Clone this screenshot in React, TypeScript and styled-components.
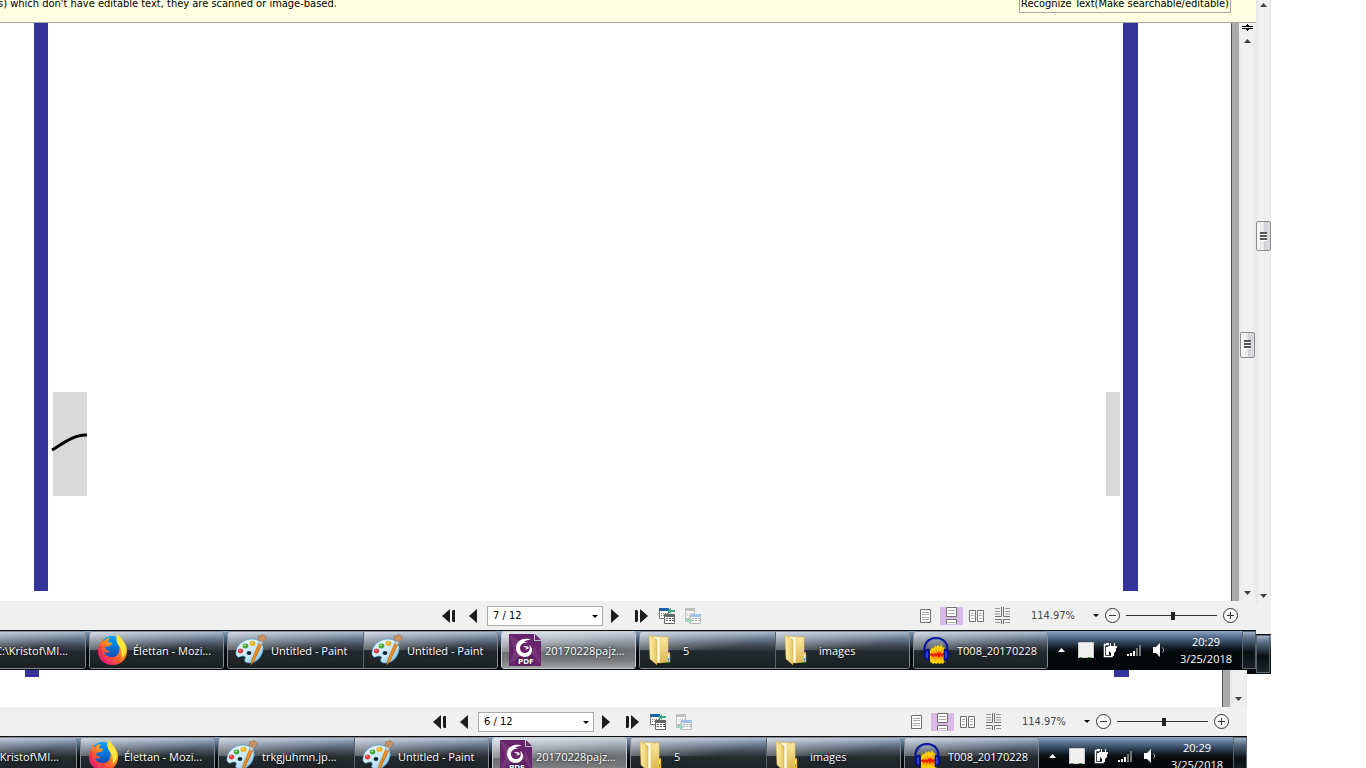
import React from "react";
import styled, { createGlobalStyle, css } from "styled-components";

const UI_FONT = `"DejaVu Sans Condensed", "DejaVu Sans", sans-serif`;
const TASK_FONT = `"Open Sans", "Noto Sans", sans-serif`;

const GlobalStyle = createGlobalStyle`
  *, *::before, *::after { box-sizing: border-box; }
  html, body, #root { height: 100%; }
  body { margin: 0; background: #fff; overflow: hidden; font-family: ${UI_FONT}; }
  button { margin: 0; padding: 0; border: 0; background: none; color: inherit; font: inherit; }
  svg { display: block; flex: none; }
`;

/* ---------- windows ---------- */

const Desktop = styled.main`
  position: relative;
  height: 100%;
  min-height: 400px;
  overflow: hidden;
  background: #fff;
`;

const windowBase = css`
  position: absolute;
  display: flex;
  flex-direction: column;
  overflow: hidden;
  background: #fff;
`;

const FrontWindow = styled.section`
  ${windowBase}
  inset: 0 110px 98px 0;
`;

const EdgeWindow = styled.section`
  ${windowBase}
  top: 0;
  right: 95px;
  bottom: 94px;
  width: 24px;
`;

/* Its taskbar runs past the lower edge of the desktop. */
const LowerWindow = styled.section`
  ${windowBase}
  left: -9px;
  right: 119px;
  bottom: -8px;
  height: 106px;
`;

/* ---------- notification bar ---------- */

const InfoBar = styled.header`
  display: flex;
  align-items: flex-start;
  justify-content: space-between;
  flex: none;
  height: 23px;
  padding-right: 25px;
  border-bottom: 1px solid #a8a8a8;
  background: #ffffe1;
  color: #000;
  font-size: 11px;
  line-height: 8px;
  white-space: nowrap;
`;

const InfoText = styled.p`
  margin: 0 0 0 -2px;
`;

const InfoButton = styled.button`
  width: 212px;
  height: 13px;
  padding-bottom: 4px;
  border: 1px solid #a8a8a8;
  border-top: 0;
  line-height: 8px;
`;

/* ---------- document ---------- */

const Viewer = styled.div`
  display: flex;
  flex: 1;
  min-height: 0;
`;

const Paper = styled.article<{ $bottom: number }>`
  display: flex;
  flex: 1;
  align-items: flex-end;
  padding: 0 93px ${(p) => p.$bottom}px 34px;
  border-right: 1px solid #555;
  background: #fff;
`;

const PageEdge = styled.div<{ $width: number }>`
  width: ${(p) => p.$width}px;
  height: 100%;
  background: #333399;
`;

const Plate = styled.div<{ $width: number }>`
  width: ${(p) => p.$width}px;
  height: 104px;
  margin-bottom: 95px;
  background: #d9d9d9;
  svg { overflow: visible; }
`;

const LeftMargin = styled.div`
  display: flex;
  gap: 5px;
  align-items: flex-end;
  height: 100%;
`;

const RightMargin = styled(LeftMargin)`
  gap: 3px;
  margin-left: auto;
`;

const Gutter = styled.div`
  width: 7px;
  background: #ababab;
`;

/* ---------- scroll bars ---------- */

const ScrollTrack = styled.div<{ $width: number }>`
  display: flex;
  flex-direction: column;
  align-items: center;
  width: ${(p) => p.$width}px;
  background: linear-gradient(90deg, #e6e6e6, #efefef 3px, #f0f0f0 13px, #e8e8e8);
`;

const ScrollSpace = styled.div<{ $grow: number }>`
  flex: ${(p) => p.$grow} 1 0;
`;

const ScrollArrow = styled.button<{ $height?: number }>`
  display: flex;
  align-items: center;
  justify-content: center;
  flex: none;
  width: 100%;
  height: ${(p) => p.$height ?? 16}px;
`;

const SplitHandle = styled.div`
  display: flex;
  justify-content: center;
  width: 100%;
  height: 10px;
  background: #f0f0f0;
`;

const ScrollThumb = styled.div<{ $height: number }>`
  display: flex;
  align-items: center;
  justify-content: center;
  flex: none;
  width: 15px;
  height: ${(p) => p.$height}px;
  border: 1px solid #8c8c8c;
  border-radius: 2px;
  background: linear-gradient(90deg, #f8f8f8, #e8e8eb 50%, #cfcfd6 55%, #dcdce0);
`;

/* ---------- status bar ---------- */

const StatusBar = styled.footer`
  display: flex;
  align-items: center;
  flex: none;
  height: 29px;
  padding: 0 18px 0 442px;
  background: #f0f0f0;
  color: #444;
  font-size: 11px;
`;

const IconButton = styled.button<{ $width: number; $active?: boolean }>`
  display: flex;
  align-items: center;
  justify-content: center;
  flex: none;
  width: ${(p) => p.$width}px;
  height: 18px;
  background: ${(p) => (p.$active ? "#d8b9e8" : "transparent")};
`;

const PageBox = styled.div`
  position: relative;
  margin: 0 8px 0 10px;
  svg { position: absolute; top: 9px; right: 5px; pointer-events: none; }
`;

const PageSelect = styled.select`
  appearance: none;
  display: block;
  width: 116px;
  height: 20px;
  padding: 0 5px;
  border: 1px solid #ababab;
  border-radius: 0;
  background: #fff;
  color: #000;
  font: 11px ${UI_FONT};
`;

const NavGroup = styled.div<{ $gap: number }>`
  display: flex;
  align-items: center;
  gap: ${(p) => p.$gap}px;
`;

const ViewGroup = styled.div`
  display: flex;
  align-items: center;
  margin-left: auto;
`;

const ZoomValue = styled.output`
  width: 50px;
  margin-left: 16px;
`;

const ZoomMenu = styled.button`
  width: 6px;
  margin: 0 6px 0 12px;
`;

const ZoomSlider = styled.input`
  appearance: none;
  width: 91px;
  height: 16px;
  margin: 0 6px;
  background: linear-gradient(#333, #333) center / 100% 1px no-repeat;
  &::-webkit-slider-thumb {
    appearance: none;
    width: 4px;
    height: 8px;
    background: #222;
  }
`;

/* ---------- task bar ---------- */

const TaskBar = styled.nav`
  display: flex;
  flex: none;
  gap: 3px;
  height: 40px;
  border-top: 1px solid #0c1014;
  border-bottom: 1px solid #06090c;
  background: linear-gradient(#8ea6c3, #5f7895 5px, #33475e 11px, #0d141b 18px, #04080b 22px);
  color: #fff;
  font-family: ${TASK_FONT};
  font-size: 11px;
`;

const TaskGroup = styled.div<{ $lead?: boolean; $active?: boolean }>`
  display: flex;
  flex: none;
  overflow: hidden;
  margin-left: ${(p) => (p.$lead ? -49 : 0)}px;
  border: 1px solid ${(p) => (p.$active ? "#c9ccd0" : "#858b91")};
  border-radius: 3px;
`;

const taskShade = css`
  background:
    linear-gradient(165deg, rgba(255, 255, 255, 0.5), rgba(255, 255, 255, 0) 75%) top / 100% 18px no-repeat,
    linear-gradient(#a3b4c9, #6f7f94 6px, #434d59 13px, #22292d 20px, #1b2022 100%);
`;

const activeShade = css`
  background:
    linear-gradient(165deg, rgba(255, 255, 255, 0.5), rgba(255, 255, 255, 0) 75%) top / 100% 20px no-repeat,
    linear-gradient(#c2cedb, #9ba3ad 8px, #6d7073 18px, #77797b 28px, #a0a2a4 100%);
`;

const TaskButton = styled.button<{ $active?: boolean }>`
  display: flex;
  align-items: center;
  gap: 4px;
  width: 135px;
  padding-left: 7px;
  text-align: left;
  white-space: nowrap;
  text-shadow: 0 0 3px #000;
  ${(p) => (p.$active ? activeShade : taskShade)}
  &:only-child { width: 133px; }
  &:last-child:not(:only-child) { width: 134px; }
  & + & { border-left: 1px solid #59616a; }
`;

const IconSlot = styled.span`
  flex: none;
  width: 32px;
  height: 32px;
`;

const Tray = styled.div`
  display: flex;
  align-items: center;
  flex: 1;
  min-width: 0;
  padding-left: 7px;
`;

const TrayButton = styled.button<{ $gap: number }>`
  flex: none;
  margin-right: ${(p) => p.$gap}px;
`;

const Clock = styled.time`
  width: 66px;
  margin-left: auto;
  line-height: 17px;
  text-align: center;
`;

const ShowDesktop = styled.button`
  flex: none;
  width: 14px;
  height: 100%;
  border: 1px solid #59636d;
  background: linear-gradient(#9fb2c8, #5b6f86 6px, #26333f 15px, #0a0f13 20px, #1c2226);
`;

const EdgeStatus = styled.div`
  flex: none;
  height: 30px;
  background: #f0f0f0;
`;

const EdgeTask = styled(TaskBar)`
  justify-content: flex-end;
  padding-right: 1px;
`;

const EdgeScrollRow = styled.div`
  display: flex;
  justify-content: flex-end;
  flex: 1;
`;

const PaintDefs = styled.svg`
  position: absolute;
  width: 0;
  height: 0;
`;

/* ---------- drawings ---------- */

const SharedPaints = () => (
  <PaintDefs aria-hidden="true">
    <defs>
      <linearGradient id="fxBody" x1="0.9" y1="0" x2="0.2" y2="1">
        <stop offset="0" stopColor="#fff44f" />
        <stop offset="0.35" stopColor="#ffb013" />
        <stop offset="0.65" stopColor="#ff5a2c" />
        <stop offset="1" stopColor="#e31587" />
      </linearGradient>
      <linearGradient id="fxGlobe" x1="0" y1="0" x2="0" y2="1">
        <stop offset="0" stopColor="#00a2ff" />
        <stop offset="1" stopColor="#123fae" />
      </linearGradient>
      <linearGradient id="palette" x1="0" y1="0" x2="1" y2="1">
        <stop offset="0" stopColor="#f2fbff" />
        <stop offset="0.6" stopColor="#c4e6f7" />
        <stop offset="1" stopColor="#69b5de" />
      </linearGradient>
      <linearGradient id="folderFront" x1="0" y1="0" x2="1" y2="0">
        <stop offset="0" stopColor="#fff3ae" />
        <stop offset="1" stopColor="#e6c45a" />
      </linearGradient>
      <linearGradient id="folderBack" x1="0" y1="0" x2="0" y2="1">
        <stop offset="0" stopColor="#f8e9a2" />
        <stop offset="1" stopColor="#dcb64c" />
      </linearGradient>
    </defs>
  </PaintDefs>
);

const FirefoxIcon = () => (
  <svg width="32" height="32" viewBox="0 0 32 32">
    <circle cx="15" cy="14" r="12" fill="url(#fxGlobe)" />
    <path fill="url(#fxBody)" d="M5 3c-1 2-1 4-1 5C2 11 1 14 1 17c0 8 6 14 15 14s14-7 14-14c0-6-3-9-6-12-1-2-2-3-3-5-2 3-2 5-1 8 3 3 3 7 2 10-1 4-4 5-7 5-4 0-7-2-8-5 2 1 4 1 6-1-3 0-5-2-5-4l5-1c1-1 2-2 2-3l-4-1c0-2 1-3 2-4-3 0-5 1-6 3L6 7C5 6 5 5 5 3z" />
    <path fill="#ffe83e" d="M21 0c1 3 8 7 8 15 0 4-2 7-4 9 0-5 0-9-3-12-3-4-3-8-1-12z" />
    <path fill="#e31b63" opacity=".45" d="M1 15c0 9 7 16 16 16-7-2-13-8-13-20-2 1-3 3-3 4z" />
  </svg>
);

const PaintIcon = () => (
  <svg width="32" height="32" viewBox="0 0 32 32">
    <path fill="url(#palette)" stroke="#4c9cc9" strokeWidth="0.7" d="M1 21C0 12 8 5 17 5c8 0 12 5 11 11-1 7-7 13-13 13-5 0-6-2-5-4s0-3-2-3c-3 0-4 2-5 1z" />
    <ellipse cx="14" cy="19" rx="2.4" ry="2.1" fill="#182735" />
    <ellipse cx="5.5" cy="17" rx="2.7" ry="2.4" fill="#e23b3b" />
    <ellipse cx="10.5" cy="12" rx="2.8" ry="2.4" fill="#43a535" />
    <ellipse cx="17.5" cy="9.5" rx="3" ry="2.4" fill="#f3ac1b" />
    <ellipse cx="5" cy="16.3" rx="1.1" ry="0.8" fill="#ff9e9e" />
    <ellipse cx="10" cy="11.4" rx="1.2" ry="0.8" fill="#a9e29b" />
    <ellipse cx="17" cy="9" rx="1.3" ry="0.8" fill="#ffe38f" />
    <path fill="#ef8e20" stroke="#b55d0c" strokeWidth="0.6" d="M24 9l3 1-8 17-3 4 1-6z" />
    <path fill="#c5cbd0" stroke="#7b8288" strokeWidth="0.4" d="M24.500 6l4 1-2 4-3-1z" />
    <path fill="#c79364" stroke="#7f5634" strokeWidth="0.4" d="M24.500 6.500c-2-1-1-4-1-5 2 1 2 0 4-1 1 1 2 0 4 3-1 2-2 3-3 4z" />
  </svg>
);

const PdfLabel = styled.text`
  font: 700 7px "DejaVu Sans", sans-serif;
  fill: #fff;
`;

const FoxitIcon = () => (
  <svg width="32" height="32" viewBox="0 0 32 32">
    <path fill="#68246b" d="M0 0h25v7h7v25H0z" />
    <path fill="#80457f" d="M0 0l12 8-6 10zM32 30L22 18l4-6zM0 30l6-14 6 6z" opacity=".6" />
    <path fill="#68246b" d="M26 0l6 6h-6z" />
    <path fill="#fff" d="M22 6C17 3 7 5 7 14c0 5 4 9 9 9 4 0 7-3 7-7 0-2-1-4-3-5 2 4 0 8-4 8-3 0-5-2-5-5 0-4 4-6 8-5-1-1-3-1-4-1 2-2 5-2 7-2z" />
    <path fill="#fff" d="M14 13c2-2 5-1 6 1-1 1-3 2-4 1 1 0 2-1 2-1-1-1-3-1-4-1z" />
    <PdfLabel x="9" y="30">PDF</PdfLabel>
  </svg>
);

const FolderIcon = () => (
  <svg width="32" height="32" viewBox="0 0 32 32">
    <path fill="#000" opacity=".3" d="M6 31l6-4 13-1-8 5z" />
    <path fill="url(#folderBack)" stroke="#c9a644" strokeWidth="0.5" d="M5 2l16 1v16l2 1v8l-12 1z" />
    <path fill="#fffbe2" d="M8 3l6 1v24l-4 1z" />
    <path fill="url(#folderBack)" stroke="#d9bd62" strokeWidth="0.4" d="M13 4l8-1v24l-8 2z" />
    <path fill="url(#folderFront)" stroke="#c9a644" strokeWidth="0.5" d="M2 1l8 5v25l-7-6z" />
    <path fill="#e6c24d" d="M20 19l3-1v9l-3 1z" />
    <path fill="#f8ffff" d="M21 20h1v5h-1z" />
    <path fill="#3f9ce0" d="M21 24h1v3h-1z" />
  </svg>
);

const AudacityIcon = () => (
  <svg width="32" height="32" viewBox="0 0 32 32">
    <path fill="#ffd200" d="M9 28V17l2-4 1 2 2-4 1 2 2-2 2 2 1-3 2 4 1-1 2 4v10l-2 1-1 2-2-1-1 1-2-1-2 1-1-1-2 1-1-1z" />
    <path fill="#ff9a00" d="M10 22l1-5 1 3 1-5 1 5 1-6 2 6 1-6 1 6 2-6 1 6 1-4 1 3v5l-1 2-1-2-2 3-1-3-2 3-1-3-2 3-1-3-2 2z" />
    <path fill="none" stroke="#f01000" strokeWidth="1.500" d="M9 21l2-1 1 2 2-2 1 2 2-3 1 4 1-4 2 3 1-2 3 1" />
    <path fill="none" stroke="#0a1690" strokeWidth="2.200" d="M4 19C2 10 7 4 15 4s13 6 11 15" />
    <path fill="none" stroke="#4056d8" strokeWidth="0.700" d="M5 13c2-5 5-8 10-8s8 3 10 8" />
    <path fill="#0a16a0" stroke="#000660" strokeWidth="0.600" d="M8 15c-7 0-7 11 0 12zM23 15c7 0 7 11 0 12z" />
    <path fill="#3144cf" d="M5 18l2-1v8l-2-2zM26 18l-2-1v8l2-2z" />
  </svg>
);

const Triangle = ({ down = false }: { down?: boolean }) => (
  <svg width="7" height="4" viewBox="0 0 7 4">
    <path fill="#404040" d={down ? "M0 0h7L3.500 4z" : "M0 4h7L3.500 0z"} />
  </svg>
);

const SmallCaret = () => (
  <svg width="6" height="3" viewBox="0 0 6 3">
    <path fill="#000" d="M0 0h6L3 3z" />
  </svg>
);

const GripLines = () => (
  <svg width="7" height="9" viewBox="0 0 7 9">
    <path fill="#555" d="M0 0h7v2H0zM0 3h7v2H0zM0 6h7v2H0z" />
    <path fill="#fff" d="M1 2h6v1H1zM1 5h6v1H1zM1 8h6v1H1z" />
  </svg>
);

const SplitIcon = () => (
  <svg width="11" height="9" viewBox="0 0 11 9">
    <path fill="#000" d="M0 3h11v1H0zM0 5h11v1H0zM5 1h1v2H5zM4 2h3v1H4zM5 6h1v2H5zM4 6h3v1H4z" />
  </svg>
);

const StepIcon = ({ back = false, end = false }: { back?: boolean; end?: boolean }) => {
  const width = end ? 13 : 8;
  return (
    <svg width={width} height="14" viewBox={`0 0 ${width} 14`}>
      <g fill="#1c1c1c" transform={back ? `translate(${width} 0) scale(-1 1)` : undefined}>
        {end && <path d="M0 1h2l1 1v10l-1 1H0z" />}
        <path d={end ? "M5 0l8 7-8 7z" : "M0 0l8 7-8 7z"} />
      </g>
    </svg>
  );
};

const HistoryIcon = ({ forward = false }: { forward?: boolean }) => (
  <svg width="17" height="16" viewBox="0 0 17 16" opacity={forward ? 0.4 : 1}>
    <path fill="#fff" stroke="#777" d="M0.500 1.500h9v9h-9z" />
    <path fill={forward ? "#777" : "#1d5fa8"} d="M0 0h10v3H0z" />
    <path stroke="#777" strokeDasharray="1 1" d="M2 5.500h7M2 7.500h7" />
    <path fill="#fff" stroke="#666" d="M5.500 6.500h10v9h-10z" />
    <path fill={forward ? "#2d7bd0" : "#666"} d="M5 6h11v3H5z" />
    <path stroke="#555" strokeDasharray="2 1" d="M7 10.500h8M7 12.500h8" />
    {forward ? (
      <path fill="#2fa578" d="M0 11h4V9l4 3.500L4 16v-2H0z" />
    ) : (
      <>
        <path fill="#f0f0f0" d="M10 0h7v6h-7z" />
        <path fill="#45a883" d="M16 4h-4v2L8 3l4-3v2h4z" />
      </>
    )}
  </svg>
);

const SinglePage = () => (
  <svg width="11" height="14" viewBox="0 0 11 14">
    <path fill="#fff" stroke="#707070" d="M0.500 0.500h10v13H0.500z" />
    <path stroke="#aaa" d="M2 3.500h7M2 5.500h7M2 8.500h7M2 10.500h7" />
  </svg>
);

const ContinuousPage = () => (
  <svg width="11" height="17" viewBox="0 0 11 17">
    <path fill="#fff" stroke="#707070" d="M0.500 0.500h10v9H0.500zM0.500 17v-4.500h10V17" />
    <path stroke="#aaa" d="M2 3.500h7M2 6.500h7M2 15.500h7" />
  </svg>
);

const FacingPages = () => (
  <svg width="15" height="12" viewBox="0 0 15 12">
    <path fill="#fff" stroke="#707070" d="M0.500 0.500h6v11h-6zM8.500 0.500h6v11h-6z" />
    <path stroke="#aaa" d="M2 3.500h3M2 5.500h3M2 8.500h3M10 3.500h3M10 5.500h3M10 8.500h3" />
  </svg>
);

const FacingContinuous = () => (
  <svg width="15" height="17" viewBox="0 0 15 17">
    <path fill="none" stroke="#707070" d="M0 9.500h6.500V0M15 9.500H8.500V0M0 12.500h6.500V17M15 12.500H8.500V17" />
    <path stroke="#999" d="M0 1.500h5M0 4.500h5M0 7h5M10 1.500h5M10 4.500h5M10 7h5M0 15.500h5M10 15.500h5" />
  </svg>
);

const ZoomSign = ({ plus = false }: { plus?: boolean }) => (
  <svg width="15" height="15" viewBox="0 0 15 15">
    <circle cx="7.500" cy="7.500" r="7" fill="#f8f8f8" stroke="#333" />
    <path stroke="#333" d={plus ? "M4 7.500h7M7.500 4v7" : "M4 7.500h7"} />
  </svg>
);

const TrayArrow = () => (
  <svg width="7" height="4" viewBox="0 0 7 4"><path fill="#fff" d="M0 4h7L3.500 0z" /></svg>
);

const TraySquare = () => (
  <svg width="16" height="16" viewBox="0 0 16 16">
    <path fill="#f0f0f0" stroke="#ccc" d="M0.500 0.500h15v15H0.500z" />
    <path fill="#3c8a40" d="M2 15h2v1H2zM10 15h3v1h-3z" />
  </svg>
);

const TrayPower = () => (
  <svg width="14" height="16" viewBox="0 0 14 16">
    <path fill="none" stroke="#fff" strokeWidth="1.500" d="M6 2.500H1.500v12H9V12" />
    <path fill="#fff" d="M3 1h3v1H3zM3 5h3v8H3zM7 1h1v3H7zM11 1h1v3h-1zM5 4h9v2h-1v3l-2 2v3H8v-3L6 9V6H5z" />
  </svg>
);

const TraySignal = () => (
  <svg width="14" height="11" viewBox="0 0 14 11">
    <path fill="#fff" d="M0 9h2v2H0zM3 8h2v3H3zM6 6h2v5H6z" />
    <path fill="#777" d="M9 3h2v8H9zM12 0h2v11h-2z" />
  </svg>
);

const TrayVolume = () => (
  <svg width="12" height="14" viewBox="0 0 12 14">
    <path fill="#fff" d="M0 4h3l4-4v14l-4-4H0z" />
    <path fill="none" stroke="#bbb" d="M9.500 4.500c1.500 1.500 1.500 3.500 0 5" />
  </svg>
);

/* ---------- composed parts ---------- */

type Task = { label: string; Icon?: React.ComponentType };

const taskGroups = (firstPaint: string): Task[][] => [
  [{ label: "C:\\Kristof\\MI..." }],
  [{ label: "Élettan - Mozi...", Icon: FirefoxIcon }],
  [
    { label: firstPaint, Icon: PaintIcon },
    { label: "Untitled - Paint", Icon: PaintIcon },
  ],
  [{ label: "20170228pajz...", Icon: FoxitIcon }],
  [
    { label: "5", Icon: FolderIcon },
    { label: "images", Icon: FolderIcon },
  ],
  [{ label: "T008_20170228", Icon: AudacityIcon }],
];

const ACTIVE_GROUP = 3;

const Tasks = ({ firstPaint }: { firstPaint: string }) => (
  <TaskBar aria-label="Taskbar">
    {taskGroups(firstPaint).map((group, i) => (
      <TaskGroup key={i} $lead={i === 0} $active={i === ACTIVE_GROUP}>
        {group.map(({ label, Icon }, j) => (
          <TaskButton key={j} $active={i === ACTIVE_GROUP}>
            <IconSlot>{Icon && <Icon />}</IconSlot>
            {label}
          </TaskButton>
        ))}
      </TaskGroup>
    ))}
    <Tray>
      <TrayButton $gap={13} aria-label="Show hidden icons"><TrayArrow /></TrayButton>
      <TrayButton $gap={9} aria-label="Window"><TraySquare /></TrayButton>
      <TrayButton $gap={10} aria-label="Power"><TrayPower /></TrayButton>
      <TrayButton $gap={12} aria-label="Network"><TraySignal /></TrayButton>
      <TrayButton $gap={0} aria-label="Volume"><TrayVolume /></TrayButton>
      <Clock>20:29<br />3/25/2018</Clock>
    </Tray>
    <ShowDesktop aria-label="Show desktop" />
  </TaskBar>
);

const Status = ({ page }: { page: string }) => (
  <StatusBar>
    <NavGroup $gap={14}>
      <IconButton $width={13} aria-label="First page"><StepIcon back end /></IconButton>
      <IconButton $width={8} aria-label="Previous page"><StepIcon back /></IconButton>
    </NavGroup>
    <PageBox>
      <PageSelect aria-label="Page" defaultValue={page}>
        <option>{page}</option>
      </PageSelect>
      <SmallCaret />
    </PageBox>
    <NavGroup $gap={9}>
      <IconButton $width={8} aria-label="Next page"><StepIcon /></IconButton>
      <NavGroup $gap={0}>
        <IconButton $width={26} aria-label="Last page"><StepIcon end /></IconButton>
        <IconButton $width={26} aria-label="Previous view"><HistoryIcon /></IconButton>
        <IconButton $width={26} aria-label="Next view"><HistoryIcon forward /></IconButton>
      </NavGroup>
    </NavGroup>
    <ViewGroup>
      <IconButton $width={29} aria-label="Single page"><SinglePage /></IconButton>
      <IconButton $width={23} $active aria-label="Continuous"><ContinuousPage /></IconButton>
      <IconButton $width={27} aria-label="Facing"><FacingPages /></IconButton>
      <IconButton $width={25} aria-label="Continuous facing"><FacingContinuous /></IconButton>
      <ZoomValue>114.97%</ZoomValue>
      <ZoomMenu aria-label="Zoom levels"><SmallCaret /></ZoomMenu>
      <IconButton $width={15} aria-label="Zoom out"><ZoomSign /></IconButton>
      <ZoomSlider type="range" min={0} max={100} defaultValue={52} aria-label="Zoom" />
      <IconButton $width={15} aria-label="Zoom in"><ZoomSign plus /></IconButton>
    </ViewGroup>
  </StatusBar>
);

export default function App() {
  return (
    <Desktop>
      <GlobalStyle />
      <SharedPaints />

      <EdgeWindow aria-label="Background window">
        <EdgeScrollRow>
          <ScrollTrack $width={15}>
            <ScrollArrow $height={10} aria-label="Scroll up"><Triangle /></ScrollArrow>
            <ScrollSpace $grow={211} />
            <ScrollThumb $height={30}><GripLines /></ScrollThumb>
            <ScrollSpace $grow={337} />
            <ScrollArrow aria-label="Scroll down"><Triangle down /></ScrollArrow>
          </ScrollTrack>
        </EdgeScrollRow>
        <EdgeStatus />
        <EdgeTask aria-label="Background taskbar">
          <ShowDesktop aria-label="Show desktop" />
        </EdgeTask>
      </EdgeWindow>

      <LowerWindow aria-label="Page 6">
        <Viewer>
          <Paper $bottom={30}>
            <LeftMargin><PageEdge $width={14} /></LeftMargin>
            <RightMargin><PageEdge $width={15} /></RightMargin>
          </Paper>
          <Gutter />
          <ScrollTrack $width={17}>
            <ScrollSpace $grow={1} />
            <ScrollArrow aria-label="Scroll down"><Triangle down /></ScrollArrow>
          </ScrollTrack>
        </Viewer>
        <Status page="6 / 12" />
        <Tasks firstPaint="trkgjuhmn.jp..." />
      </LowerWindow>

      <FrontWindow aria-label="Page 7">
        <InfoBar>
          <InfoText>s) which don't have editable text, they are scanned or image-based.</InfoText>
          <InfoButton>Recognize Text(Make searchable/editable)</InfoButton>
        </InfoBar>
        <Viewer>
          <Paper $bottom={10}>
            <LeftMargin>
              <PageEdge $width={14} />
              <Plate $width={34}>
                <svg width="34" height="104" viewBox="0 0 34 104">
                  <path fill="none" stroke="#000" strokeWidth="3" d="M-1 58C9 52 22 42 34 43" />
                </svg>
              </Plate>
            </LeftMargin>
            <RightMargin>
              <Plate $width={14} />
              <PageEdge $width={15} />
            </RightMargin>
          </Paper>
          <Gutter />
          <ScrollTrack $width={17}>
            <SplitHandle><SplitIcon /></SplitHandle>
            <ScrollArrow aria-label="Scroll up"><Triangle /></ScrollArrow>
            <ScrollSpace $grow={282} />
            <ScrollThumb $height={26}><GripLines /></ScrollThumb>
            <ScrollSpace $grow={227} />
            <ScrollArrow aria-label="Scroll down"><Triangle down /></ScrollArrow>
          </ScrollTrack>
        </Viewer>
        <Status page="7 / 12" />
        <Tasks firstPaint="Untitled - Paint" />
      </FrontWindow>
    </Desktop>
  );
}
